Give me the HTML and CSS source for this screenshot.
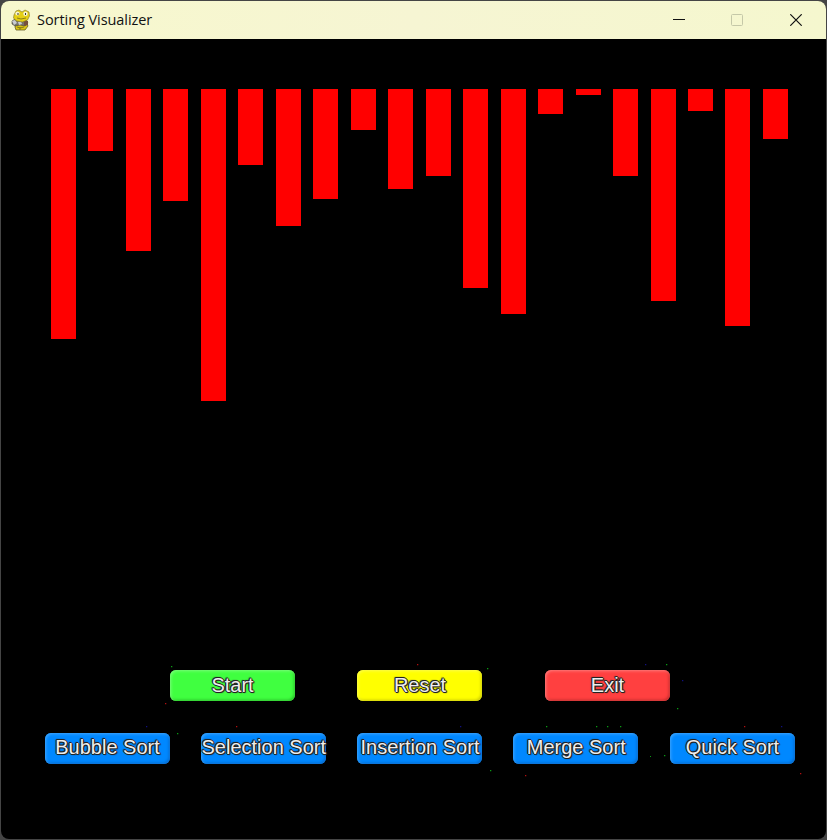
FILE: index.html
```html
<!DOCTYPE html>
<html lang="en">
<head>
<meta charset="utf-8">
<title>Sorting Visualizer</title>
<link rel="stylesheet" href="styles.css">
</head>
<body>
<div class="window">
  <header class="titlebar">
    <svg class="logo" width="20" height="22" viewBox="0 0 20 22">
      <path d="M4 18l1-4 10-1 2 4-3 4H5z" fill="#d8c313" stroke="#665c25" stroke-width=".8"/>
      <path d="M1 12l3-2 11 1 2 3-3 3-5-1-5 1-3-2z" fill="#77756c" stroke="#46443a" stroke-width=".6"/>
      <path d="M1 12l3-1 2 3-3 2zM7 13l3-1 1 3-3 1z" fill="#c9cbd2"/>
      <path d="M13 11l4 1v4l-4 1z" fill="#75503e"/>
      <path d="M3 6l2-4 3-1 3 2 3-2 4 2 .5 4-2 4-5 2-6-1-3-3z" fill="#e4cf16" stroke="#7c7022" stroke-width=".6"/>
      <circle cx="6.5" cy="4.5" r="2.1" fill="#f5f3d7"/><circle cx="14.5" cy="4.7" r="2.2" fill="#f5f3d7"/>
      <path d="M6.5 4h1v2h-1zM14 4h1v2h-1z" fill="#343323"/>
      <path d="M6 9l4 1 5-1M6 18l3 1 4-1M9 18v3" stroke="#756a19" stroke-width=".8" fill="none"/>
    </svg>
    <h1 class="title">Sorting Visualizer</h1>
    <div class="controls">
      <svg width="12" height="12" viewBox="0 0 12 12"><path d="M0 5.5h12" stroke="#111"/></svg>
      <svg width="12" height="12" viewBox="0 0 12 12"><rect x=".5" y=".5" width="11" height="11" rx="1" fill="none" stroke="#c5c8a8"/></svg>
      <svg width="12" height="12" viewBox="0 0 12 12"><path d="M.3.3l11.4 11.4M11.7.3L.3 11.7" stroke="#111" stroke-width="1.2"/></svg>
    </div>
  </header>
  <main class="canvas">
    <div class="chart">
      <div class="bar" style="height:250px"></div>
      <div class="bar" style="height:62.4px"></div>
      <div class="bar" style="height:162.4px"></div>
      <div class="bar" style="height:112.4px"></div>
      <div class="bar" style="height:312.4px"></div>
      <div class="bar" style="height:76px"></div>
      <div class="bar" style="height:137.4px"></div>
      <div class="bar" style="height:110px"></div>
      <div class="bar" style="height:41px"></div>
      <div class="bar" style="height:100px"></div>
      <div class="bar" style="height:87.4px"></div>
      <div class="bar" style="height:199px"></div>
      <div class="bar" style="height:225px"></div>
      <div class="bar" style="height:25px"></div>
      <div class="bar" style="height:6.25px"></div>
      <div class="bar" style="height:87.4px"></div>
      <div class="bar" style="height:212.4px"></div>
      <div class="bar" style="height:22.4px"></div>
      <div class="bar" style="height:237.4px"></div>
      <div class="bar" style="height:50px"></div>
    </div>
    <div class="row actions">
      <button class="btn start">Start</button>
      <button class="btn reset">Reset</button>
      <button class="btn exit">Exit</button>
    </div>
    <div class="row sorts">
      <button class="btn">Bubble Sort</button>
      <button class="btn">Selection Sort</button>
      <button class="btn">Insertion Sort</button>
      <button class="btn">Merge Sort</button>
      <button class="btn">Quick Sort</button>
    </div>
  </main>
</div>
<svg class="specks" width="827" height="840" viewBox="0 0 827 840">
  <path fill="#0a9a14" d="M171 666h1.3v1.3h-1.3zM487 668h1.3v1.3h-1.3zM666 664h1.3v1.3h-1.3zM677 708h1.3v1.3h-1.3zM177 733h1.3v1.3h-1.3zM546 726h1.3v1.3h-1.3zM596 726h1.3v1.3h-1.3zM607 726h1.3v1.3h-1.3zM620 726h1.3v1.3h-1.3zM490 770h1.3v1.3h-1.3zM664 755h1.3v1.3h-1.3zM650 756h1v1h-1z"/>
  <path fill="#b01010" d="M165 703h1.3v1.3h-1.3zM417 664h1.3v1.3h-1.3zM236 726h1.3v1.3h-1.3zM525 775h1.3v1.3h-1.3zM744 726h1.3v1.3h-1.3zM800 773h1.3v1.3h-1.3z"/>
  <path fill="#101080" d="M645 664h1.3v1.3h-1.3zM682 680h1.3v1.3h-1.3zM146 726h1.3v1.3h-1.3zM460 726h1.3v1.3h-1.3zM781 726h1.3v1.3h-1.3z"/>
</svg>
</body>
</html>
```
FILE: styles.css
```css
* { box-sizing: border-box; }
body {
  margin: 0;
  width: 827px;
  height: 840px;
  padding: 1px;
  background: #454545;
  overflow: hidden;
}
.window {
  height: 838px;
  border-radius: 8px;
  overflow: hidden;
  background: #000;
}
.titlebar {
  height: 38px;
  display: flex;
  align-items: center;
  padding: 0 24px 0 10px;
  background: linear-gradient(90deg, #f7f8cd, #f6f5d3 50%, #f5f7ce);
}
.logo { flex: none; }
.title {
  margin: 0 0 0 6px;
  font: 400 14.5px/20px "Open Sans", sans-serif;
  letter-spacing: -0.06px;
  color: #111;
  white-space: nowrap;
}
.controls {
  margin-left: auto;
  display: flex;
  gap: 47px 46px;
}
.controls svg { display: block; }
.controls svg:last-child { margin-left: 1px; }
.canvas { height: 800px; }
.chart {
  height: 631px;
  padding: 50px 0 0 50px;
  display: flex;
  align-items: flex-start;
  gap: 12.48px;
}
.bar {
  flex: none;
  width: 25px;
  background: #f00;
}
.row { display: flex; }
.actions { padding-left: 168.5px; gap: 62.5px; }
.sorts { padding: 31.25px 0 0 43.5px; gap: 31.25px; }
.btn {
  flex: none;
  width: 125px;
  height: 31.25px;
  padding: 0 0 1.5px 1px;
  border: 0;
  border-radius: 6px;
  display: flex;
  align-items: center;
  justify-content: center;
  white-space: nowrap;
  font: 20px/28px "Liberation Sans", Arial, sans-serif;
  color: #eee;
  background: #0088ff;
  box-shadow: inset 1px 1px 3px #40a8ff, inset -1px -1px 3px #0562c2;
  text-shadow: 1px 0 #222, -1px 0 #222, 0 1px #222, 0 -1px #222, 1px 1px 1px #222, -1px -1px 1px #222;
}
.start {
  background: #40ff40;
  box-shadow: inset 1px 1px 3px #80ff80, inset -1px -1px 3px #20b820;
}
.reset {
  background: #ff0;
  box-shadow: inset 1px 1px 3px #ffff50, inset -1px -1px 3px #c4c400;
}
.exit {
  background: #ff4040;
  box-shadow: inset 1px 1px 3px #ff8080, inset -1px -1px 3px #b82424;
}
.specks {
  position: absolute;
  left: 0;
  top: 0;
  pointer-events: none;
}
```
